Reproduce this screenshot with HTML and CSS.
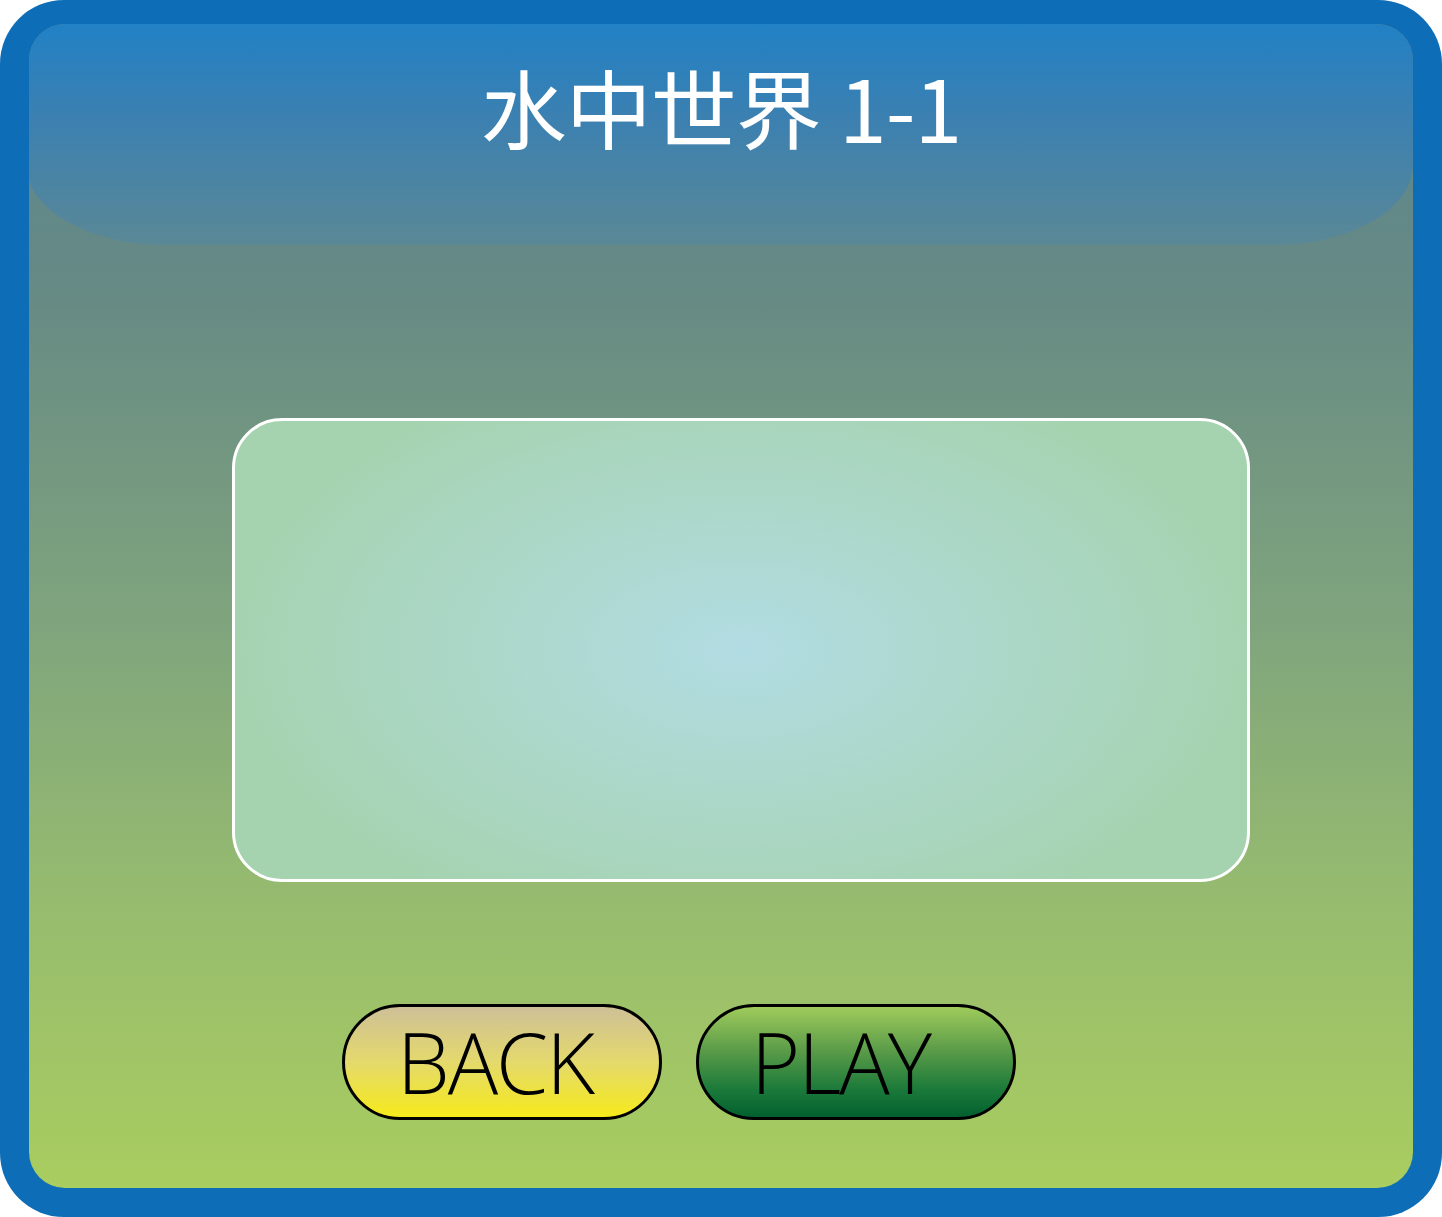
FILE: index.html
```html
<!DOCTYPE html>
<html lang="zh">
<head>
<meta charset="utf-8">
<title>水中世界 1-1</title>
<link rel="stylesheet" href="styles.css">
</head>
<body>
<div class="frame">
  <div class="inner">
    <div class="gloss"></div>
    <h1 class="title">水中世界 1-1</h1>
    <div class="panel"></div>
    <div class="actions">
      <button class="btn btn-back">BACK</button>
      <button class="btn btn-play">PLAY</button>
    </div>
  </div>
</div>
</body>
</html>
```
FILE: styles.css
```css
html, body {
  margin: 0;
  padding: 0;
  background: #ffffff;
}
.frame {
  width: 1442px;
  height: 1217px;
  box-sizing: border-box;
  background: #0e6db7;
  border-radius: 64px;
  padding: 24px 29px 29px 29px;
}
.inner {
  position: relative;
  height: 100%;
  border-radius: 36px;
  background: linear-gradient(#5a8492 0%, #668a84 23%, #80a57d 52%, #97bc6e 76%, #a9cd5f 100%);
  display: flex;
  flex-direction: column;
  align-items: center;
  overflow: hidden;
}
.gloss {
  position: absolute;
  left: -3px;
  right: 0;
  top: 0;
  height: 221px;
  border-radius: 36px 36px 140px 140px / 36px 36px 80px 80px;
  background: linear-gradient(#2181c5 0%, #3a80b2 40%, #5a8896 100%);
}
.title {
  position: relative;
  margin: 32px 0 0 0;
  height: 100px;
  font-family: "Noto Sans CJK SC", "Noto Sans", sans-serif;
  font-weight: 400;
  font-size: 86px;
  line-height: 100px;
  color: #ffffff;
  letter-spacing: -1px;
}
.panel {
  margin-top: 262px;
  margin-left: 40px;
  width: 1018px;
  height: 464px;
  box-sizing: border-box;
  border: 3px solid #ffffff;
  border-radius: 50px;
  background: radial-gradient(ellipse 520px 300px at 50% 50%, #b2dce3 0%, #a5d3af 100%);
}
.actions {
  margin-top: 122px;
  display: flex;
  gap: 34px;
  align-self: flex-start;
  margin-left: 313px;
}
.btn {
  width: 320px;
  height: 116px;
  box-sizing: border-box;
  border: 3px solid #000000;
  border-radius: 58px;
  padding: 0 0 0 52px;
  text-align: left;
  font-family: "Open Sans", "Lato", sans-serif;
  font-weight: 300;
  font-size: 84px;
  line-height: 1;
  color: #000000;
  letter-spacing: -2px;
}
.btn-back {
  background: linear-gradient(#cec097 0%, #e4d96c 50%, #f6ea1c 100%);
}
.btn-play {
  background: linear-gradient(#9fcb5c 0%, #5a9b48 40%, #1b7a3a 75%, #036030 100%);
}
```
